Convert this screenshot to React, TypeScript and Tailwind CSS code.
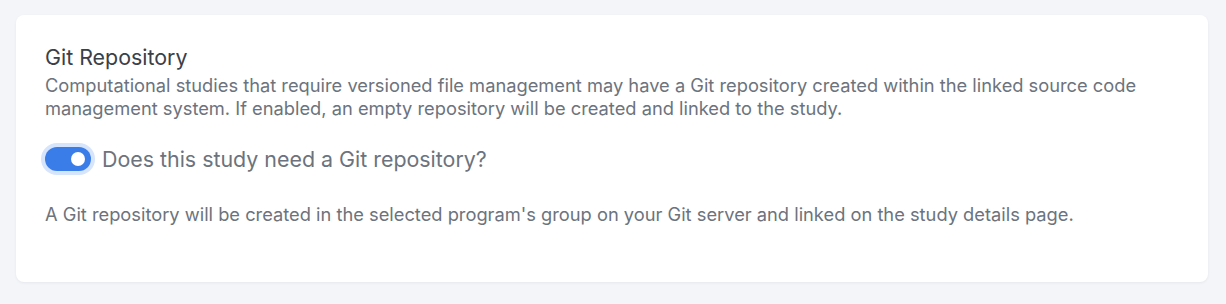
import { useState } from "react";

export default function App() {
  const [enabled, setEnabled] = useState(true);

  return (
    <div className="min-h-screen w-full bg-[#f4f5f9] pl-4 pr-[18px] pt-[15px] font-['Inter',sans-serif]">
      <section className="rounded-lg bg-white px-[29px] pt-[29px] pb-[56px] shadow-[0_1px_3px_rgba(16,24,40,0.06)]">
        <h2 className="text-[21.4px] leading-[26px] text-[#3a4048]">Git Repository</h2>
        <p className="mt-[4px] text-[18.3px] leading-[23px] text-[#6c737d]">
          Computational studies that require versioned file management may have a Git repository created within the linked source code
          management system. If enabled, an empty repository will be created and linked to the study.
        </p>

        <label className="mt-[25px] flex items-center gap-[11px] cursor-pointer">
          <button
            type="button"
            role="switch"
            aria-checked={enabled}
            onClick={() => setEnabled(!enabled)}
            className={
              "relative inline-flex h-6 w-[46px] shrink-0 items-center rounded-full ring-4 ring-[#d6e4fc] " +
              (enabled ? "bg-[#3b7de8]" : "bg-gray-300")
            }
          >
            <span
              className={
                "inline-block h-[14px] w-[14px] rounded-full bg-white transition-transform " +
                (enabled ? "translate-x-[26px]" : "translate-x-[5px]")
              }
            />
          </button>
          <span className="text-[21.4px] leading-7 text-[#6c737d]">Does this study need a Git repository?</span>
        </label>

        <p className="mt-[30px] text-[18.3px] leading-[23px] text-[#6c737d]">
          A Git repository will be created in the selected program's group on your Git server and linked on the study details page.
        </p>
      </section>
    </div>
  );
}
